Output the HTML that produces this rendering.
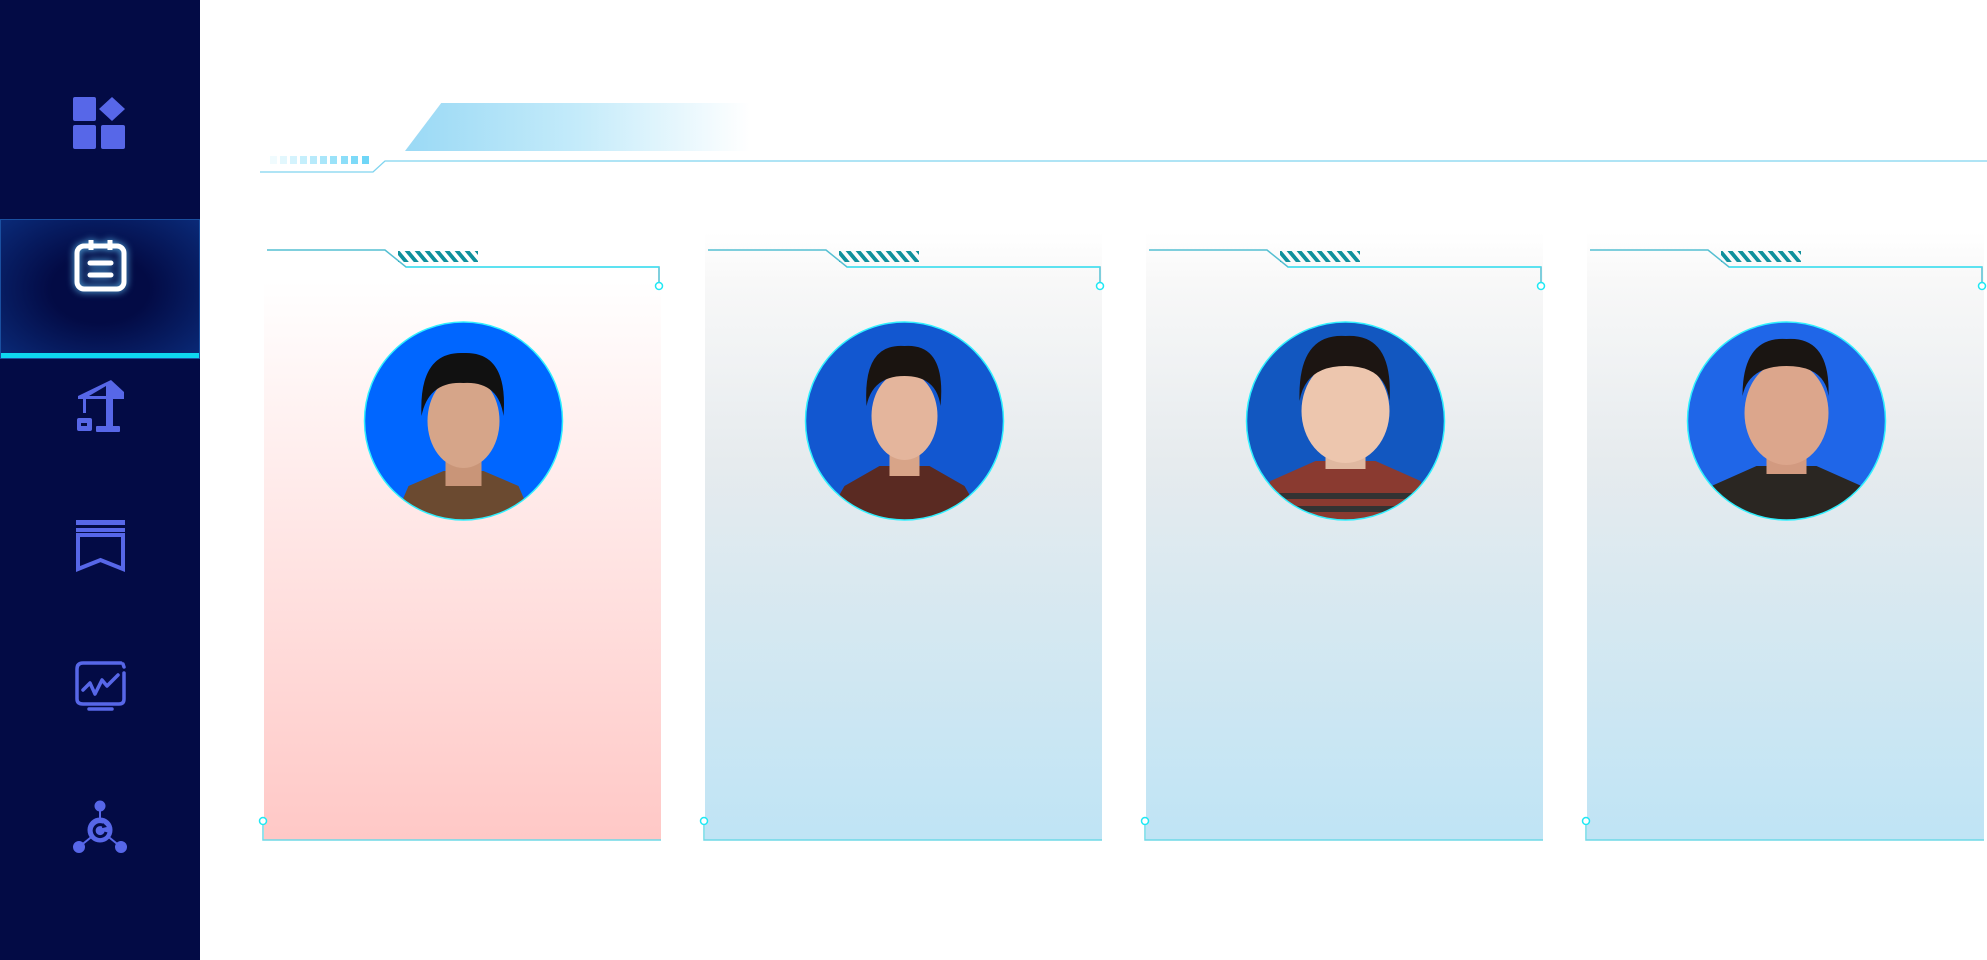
<!DOCTYPE html>
<html><head><meta charset="utf-8"><style>
*{margin:0;padding:0;box-sizing:border-box}
body{width:1987px;height:960px;background:#fff;position:relative;overflow:hidden;font-family:"Liberation Sans",sans-serif}
.sb{position:absolute;left:0;top:0;width:200px;height:960px;background:#030b45}
.act{position:absolute;left:0;top:219px;width:200px;height:140px;border:1px solid #1a4fa0;background:radial-gradient(ellipse at center,#030b45 35%,#0a2a78 100%)}
.act:after{content:"";position:absolute;left:0;right:0;bottom:0;height:5px;background:#0ed8f0}
svg{position:absolute;overflow:visible}
.card{position:absolute;top:232px;width:397px;height:608px}
.c1{background:linear-gradient(rgba(255,255,255,0),#fff 8%,#ffc8c6)}
.c2{background:linear-gradient(rgba(249,249,249,0),#f8f8f8 8%,#e6ebee 38%,#bfe4f5)}
</style></head><body>
<div class="sb"></div>
<div class="act"></div>
<svg style="left:73px;top:97px" width="54" height="52" viewBox="0 0 54 52"><rect x="0" y="0" width="23" height="24" rx="2" fill="#5767e8"/><path d="M39 0 L52 12 L39 24 L26 12Z" fill="#5767e8"/><rect x="0" y="28" width="23" height="24" rx="2" fill="#5767e8"/><rect x="28" y="28" width="24" height="24" rx="2" fill="#5767e8"/></svg>
<svg style="left:74px;top:238px" width="54" height="54" viewBox="0 0 54 54"><g fill="none" stroke="#fff" stroke-width="5" style="filter:drop-shadow(0 0 4px #6cf)"><rect x="3" y="8" width="47" height="43" rx="7"/><line x1="17" y1="2" x2="17" y2="12"/><line x1="36" y1="2" x2="36" y2="12"/><line x1="16" y1="25" x2="37" y2="25" stroke-linecap="round"/><line x1="16" y1="37" x2="37" y2="37" stroke-linecap="round"/></g></svg>
<svg style="left:76px;top:380px" width="50" height="52" viewBox="0 0 50 52"><g fill="#5767e8"><path d="M2 16 L35 0 L48 12 L48 19 L2 19Z"/><path d="M13 16 L30 6 L30 16Z" fill="#030b45"/><rect x="7" y="19" width="3" height="14"/><rect x="1" y="38" width="15" height="13" rx="2"/><rect x="5" y="43" width="6" height="3" fill="#030b45"/><rect x="30" y="19" width="7" height="30"/><rect x="20" y="46" width="24" height="6" rx="1"/></g></svg>
<svg style="left:76px;top:520px" width="50" height="52" viewBox="0 0 50 52"><g fill="#5767e8"><rect x="0" y="0" width="49" height="5"/><rect x="0" y="8" width="49" height="4"/></g><path d="M2 15 H47 V49 L24.5 40 L2 49Z" fill="none" stroke="#5767e8" stroke-width="4"/></svg>
<svg style="left:75px;top:661px" width="52" height="50" viewBox="0 0 52 50"><g fill="none" stroke="#5767e8" stroke-width="3.5" stroke-linecap="round" stroke-linejoin="round"><path d="M46 2 H8 Q2 2 2 8 V38 Q2 43 8 43 H44 Q49 43 49 38 V12"/><path d="M49 6 L48 3"/><path d="M8 29 L15 22 L20 33 L27 19 L32 25 L43 14"/><line x1="14" y1="48" x2="37" y2="48"/></g></svg>
<svg style="left:73px;top:800px" width="54" height="54" viewBox="0 0 54 54"><g fill="#5767e8" stroke="#5767e8"><circle cx="27" cy="6" r="5"/><circle cx="6" cy="47" r="5.5"/><circle cx="48" cy="47" r="5.5"/><line x1="27" y1="6" x2="27" y2="30" stroke-width="2"/><line x1="6" y1="47" x2="27" y2="30" stroke-width="2"/><line x1="48" y1="47" x2="27" y2="30" stroke-width="2"/><circle cx="27" cy="30" r="12"/></g><path d="M32 27 A6 6 0 1 0 33 32" fill="none" stroke="#030b45" stroke-width="3"/><path d="M30 23 L34 27 L29 28Z" fill="#030b45"/></svg>

<div style="position:absolute;left:405px;top:103px;width:345px;height:48px;background:linear-gradient(90deg,#9ad9f5,#c4ebfa 50%,rgba(255,255,255,0));clip-path:polygon(10.5% 0,100% 0,100% 100%,0 100%)"></div>
<svg style="left:0;top:0" width="1987" height="200">
<g fill="#6fd6f7"><rect x="270" y="156" width="7" height="8" opacity=".1"/><rect x="280" y="156" width="7" height="8" opacity=".2"/><rect x="290" y="156" width="7" height="8" opacity=".3"/><rect x="300" y="156" width="7" height="8" opacity=".4"/><rect x="310" y="156" width="7" height="8" opacity=".5"/><rect x="320" y="156" width="7" height="8" opacity=".6"/><rect x="330" y="156" width="7" height="8" opacity=".7"/><rect x="341" y="156" width="7" height="8" opacity=".8"/><rect x="351" y="156" width="7" height="8" opacity=".9"/><rect x="362" y="156" width="7" height="8"/></g>
<path d="M260 172 H373 L385 161 H1987" fill="none" stroke="#7fd4ef" stroke-width="1.3"/>
</svg>

<div class="card c1" style="left:264px"></div>
<div class="card c2" style="left:705px"></div>
<div class="card c2" style="left:1146px"></div>
<div class="card c2" style="left:1587px"></div>

<svg style="left:0;top:0" width="1987" height="960">
<defs>
<pattern id="st" width="10" height="12" patternUnits="userSpaceOnUse" patternTransform="skewX(40)"><rect width="5" height="12" fill="#10909c"/></pattern>
<g id="deco">
<path d="M3 250 H121 L142 267 H395 V282" fill="none" stroke="#55bfd2" stroke-width="1.5"/>
<path d="M142 267 H395" stroke="#44e4f4" stroke-width="1.5"/>
<circle cx="395" cy="286" r="3.5" fill="#fff" stroke="#1ee8f4" stroke-width="1.5"/>
<rect x="134" y="251" width="80" height="11" fill="url(#st)"/>
<circle cx="-1" cy="821" r="3.5" fill="#fff" stroke="#1ee8f4" stroke-width="1.5"/>
<path d="M-1 825 V840 H397" fill="none" stroke="#6fd8e6" stroke-width="1.5"/>
</g>
<clipPath id="cc"><circle cx="0" cy="0" r="99"/></clipPath>
</defs>
<use href="#deco" x="264"/><use href="#deco" x="705"/><use href="#deco" x="1146"/><use href="#deco" x="1587"/>

<g transform="translate(463.5,421)"><g clip-path="url(#cc)"><rect x="-100" y="-100" width="200" height="200" fill="#0066ff"/><path d="M-70 100 L-55 65 L-20 50 L20 50 L55 65 L70 100Z" fill="#6b4a30"/><rect x="-18" y="30" width="36" height="35" fill="#c99578"/><ellipse cx="0" cy="0" rx="36" ry="47" fill="#d6a589"/><path d="M-42 -5 Q-45 -70 0 -68 Q45 -70 40 -5 Q35 -40 0 -38 Q-35 -40 -42 -5Z" fill="#111"/></g><circle r="99" fill="none" stroke="#2ff0ff" stroke-width="1.5"/></g>

<g transform="translate(904.5,421)"><g clip-path="url(#cc)"><rect x="-100" y="-100" width="200" height="200" fill="#1257d0"/><path d="M-80 100 L-60 65 L-25 45 L25 45 L60 65 L80 100Z" fill="#5a2a22"/><rect x="-15" y="25" width="30" height="30" fill="#d8a488"/><ellipse cx="0" cy="-5" rx="33" ry="44" fill="#e4b59c"/><path d="M-38 -15 Q-42 -78 0 -75 Q42 -78 36 -15 Q32 -45 0 -45 Q-32 -45 -38 -15Z" fill="#1a1410"/></g><circle r="99" fill="none" stroke="#2ff0ff" stroke-width="1.5"/></g>

<g transform="translate(1345.5,421)"><g clip-path="url(#cc)"><rect x="-100" y="-100" width="200" height="200" fill="#1257c0"/><path d="M-90 100 L-75 60 L-30 40 L30 40 L75 60 L90 100Z" fill="#8a3a30"/><path d="M-80 75 H80 M-85 88 H85" stroke="#333" stroke-width="6"/><rect x="-20" y="20" width="40" height="28" fill="#e0b8a0"/><ellipse cx="0" cy="-10" rx="44" ry="52" fill="#edc6ae"/><path d="M-46 -20 Q-48 -88 0 -85 Q48 -88 44 -20 Q40 -55 0 -55 Q-40 -55 -46 -20Z" fill="#1c1512"/></g><circle r="99" fill="none" stroke="#2ff0ff" stroke-width="1.5"/></g>

<g transform="translate(1786.5,421)"><g clip-path="url(#cc)"><rect x="-100" y="-100" width="200" height="200" fill="#1f66e8"/><path d="M-90 100 L-75 65 L-30 45 L30 45 L75 65 L90 100Z" fill="#2a2622"/><rect x="-20" y="25" width="40" height="28" fill="#d29a80"/><ellipse cx="0" cy="-8" rx="42" ry="52" fill="#dca68c"/><path d="M-44 -25 Q-44 -85 0 -82 Q44 -85 42 -25 Q38 -55 0 -55 Q-38 -55 -44 -25Z" fill="#1a1512"/></g><circle r="99" fill="none" stroke="#2ff0ff" stroke-width="1.5"/></g>
</svg>
</body></html>
